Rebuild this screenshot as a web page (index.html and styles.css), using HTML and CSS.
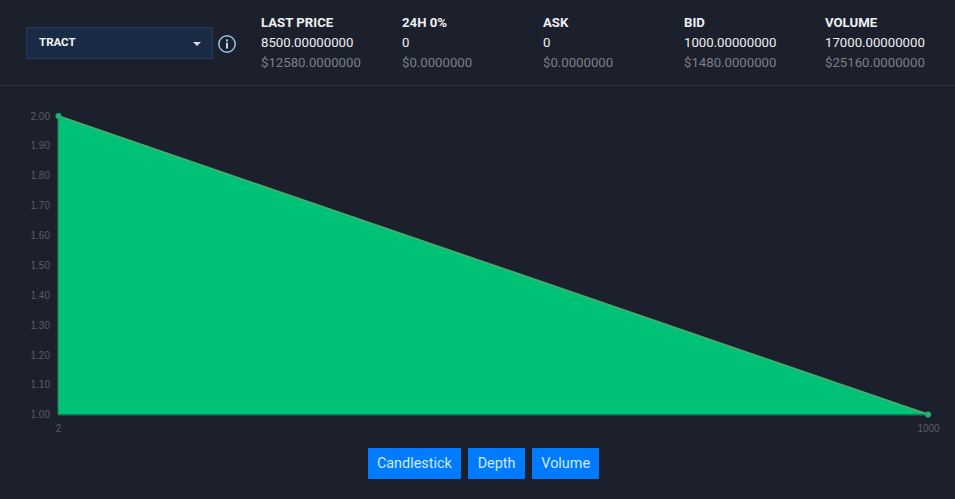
FILE: index.html
```html
<!DOCTYPE html>
<html lang="en">
<head>
  <meta charset="UTF-8">
  <title>Market</title>
  <link rel="stylesheet" href="styles.css">
</head>
<body>
  <div class="header">
    <div class="picker">
      <div class="select">
        <span>TRACT</span>
        <span class="caret"></span>
      </div>
      <svg class="info" width="20" height="20" viewBox="0 0 20 20">
        <circle cx="10" cy="10" r="8.2" fill="none" stroke="#8fc4ea" stroke-width="1.5"/>
        <rect x="9.1" y="8.6" width="1.8" height="6" fill="#d5e9f8"/>
        <rect x="9.1" y="5.4" width="1.8" height="1.9" fill="#d5e9f8"/>
      </svg>
    </div>
    <div class="stats">
      <div class="stat">
        <div class="stat-title">LAST PRICE</div>
        <div class="stat-value">8500.00000000</div>
        <div class="stat-usd">$12580.0000000</div>
      </div>
      <div class="stat">
        <div class="stat-title">24H 0%</div>
        <div class="stat-value">0</div>
        <div class="stat-usd">$0.0000000</div>
      </div>
      <div class="stat">
        <div class="stat-title">ASK</div>
        <div class="stat-value">0</div>
        <div class="stat-usd">$0.0000000</div>
      </div>
      <div class="stat">
        <div class="stat-title">BID</div>
        <div class="stat-value">1000.00000000</div>
        <div class="stat-usd">$1480.0000000</div>
      </div>
      <div class="stat">
        <div class="stat-title">VOLUME</div>
        <div class="stat-value">17000.00000000</div>
        <div class="stat-usd">$25160.0000000</div>
      </div>
    </div>
  </div>

  <svg class="chart" width="955" height="350" viewBox="0 0 955 350">
    <polygon class="area" points="58,30 928,328.5 58,328.5"/>
    <line class="edge" x1="58" y1="30" x2="928" y2="328.5"/>
    <line class="axis" x1="58" y1="30" x2="58" y2="329"/>
    <line class="axis" x1="58" y1="329" x2="928" y2="329"/>
    <circle class="dot" cx="58.5" cy="30" r="3"/>
    <circle class="dot" cx="928" cy="328.5" r="3"/>
    <g class="labels y-labels">
      <text x="50" y="34">2.00</text>
      <text x="50" y="63">1.90</text>
      <text x="50" y="93">1.80</text>
      <text x="50" y="123">1.70</text>
      <text x="50" y="153">1.60</text>
      <text x="50" y="183">1.50</text>
      <text x="50" y="213">1.40</text>
      <text x="50" y="243">1.30</text>
      <text x="50" y="273">1.20</text>
      <text x="50" y="302">1.10</text>
      <text x="50" y="332">1.00</text>
    </g>
    <g class="labels x-labels">
      <text x="58.5" y="346">2</text>
      <text x="928.5" y="346">1000</text>
    </g>
  </svg>

  <div class="tabs">
    <button class="tab">Candlestick</button>
    <button class="tab">Depth</button>
    <button class="tab">Volume</button>
  </div>
</body>
</html>
```

FILE: styles.css
```css
body {
  margin: 0;
  background-color: #1c202d;
  font-family: Roboto, 'Liberation Sans', sans-serif;
  color: #eef0f3;
  font-size: 13.2px;
  height: 499px;
  overflow: hidden;
}
.header {
  display: flex;
  align-items: flex-start;
  box-sizing: border-box;
  height: 86px;
  padding-left: 26px;
  border-bottom: 1px solid #2c3241;
}
.picker {
  display: flex;
  flex: none;
  align-items: center;
  margin-top: 27px;
  width: 235px;
}
.select {
  display: flex;
  justify-content: space-between;
  align-items: center;
  box-sizing: border-box;
  width: 187px;
  height: 32px;
  padding: 0 11px 2px 12px;
  background-color: #1a2b45;
  border: 1px solid #253c5c;
  font-size: 11.5px;
  font-weight: 700;
  color: #f2f4f7;
}
.caret {
  width: 0;
  height: 0;
  margin-top: 4px;
  border-left: 4px solid transparent;
  border-right: 4px solid transparent;
  border-top: 4px solid #d7dbe1;
}
.info {
  margin-left: 4px;
  margin-top: 2px;
}
.stats {
  display: flex;
  flex: none;
  margin-top: 13px;
}
.stat {
  width: 141px;
  line-height: 20px;
  white-space: nowrap;
}
.stat-title {
  font-weight: 700;
}
.stat-usd {
  color: #7b7f88;
}
.chart {
  display: block;
}
.area {
  fill: #00c277;
}
.edge {
  stroke: #3fb070;
  stroke-width: 2;
}
.axis {
  stroke: #16805a;
  stroke-width: 1;
}
.dot {
  fill: #1ab673;
}
.labels text {
  font-family: 'Liberation Sans', sans-serif;
  font-size: 10px;
  fill: #5a5d66;
}
.y-labels text {
  text-anchor: end;
}
.x-labels text {
  text-anchor: middle;
}
.tabs {
  display: flex;
  justify-content: center;
  gap: 7.5px;
  margin-top: 12px;
  padding-left: 12px;
}
.tab {
  height: 31px;
  padding: 0 9.2px;
  border: none;
  background-color: #007bff;
  color: #d3e9ff;
  font-family: Roboto, 'Liberation Sans', sans-serif;
  font-size: 14.4px;
}
```
